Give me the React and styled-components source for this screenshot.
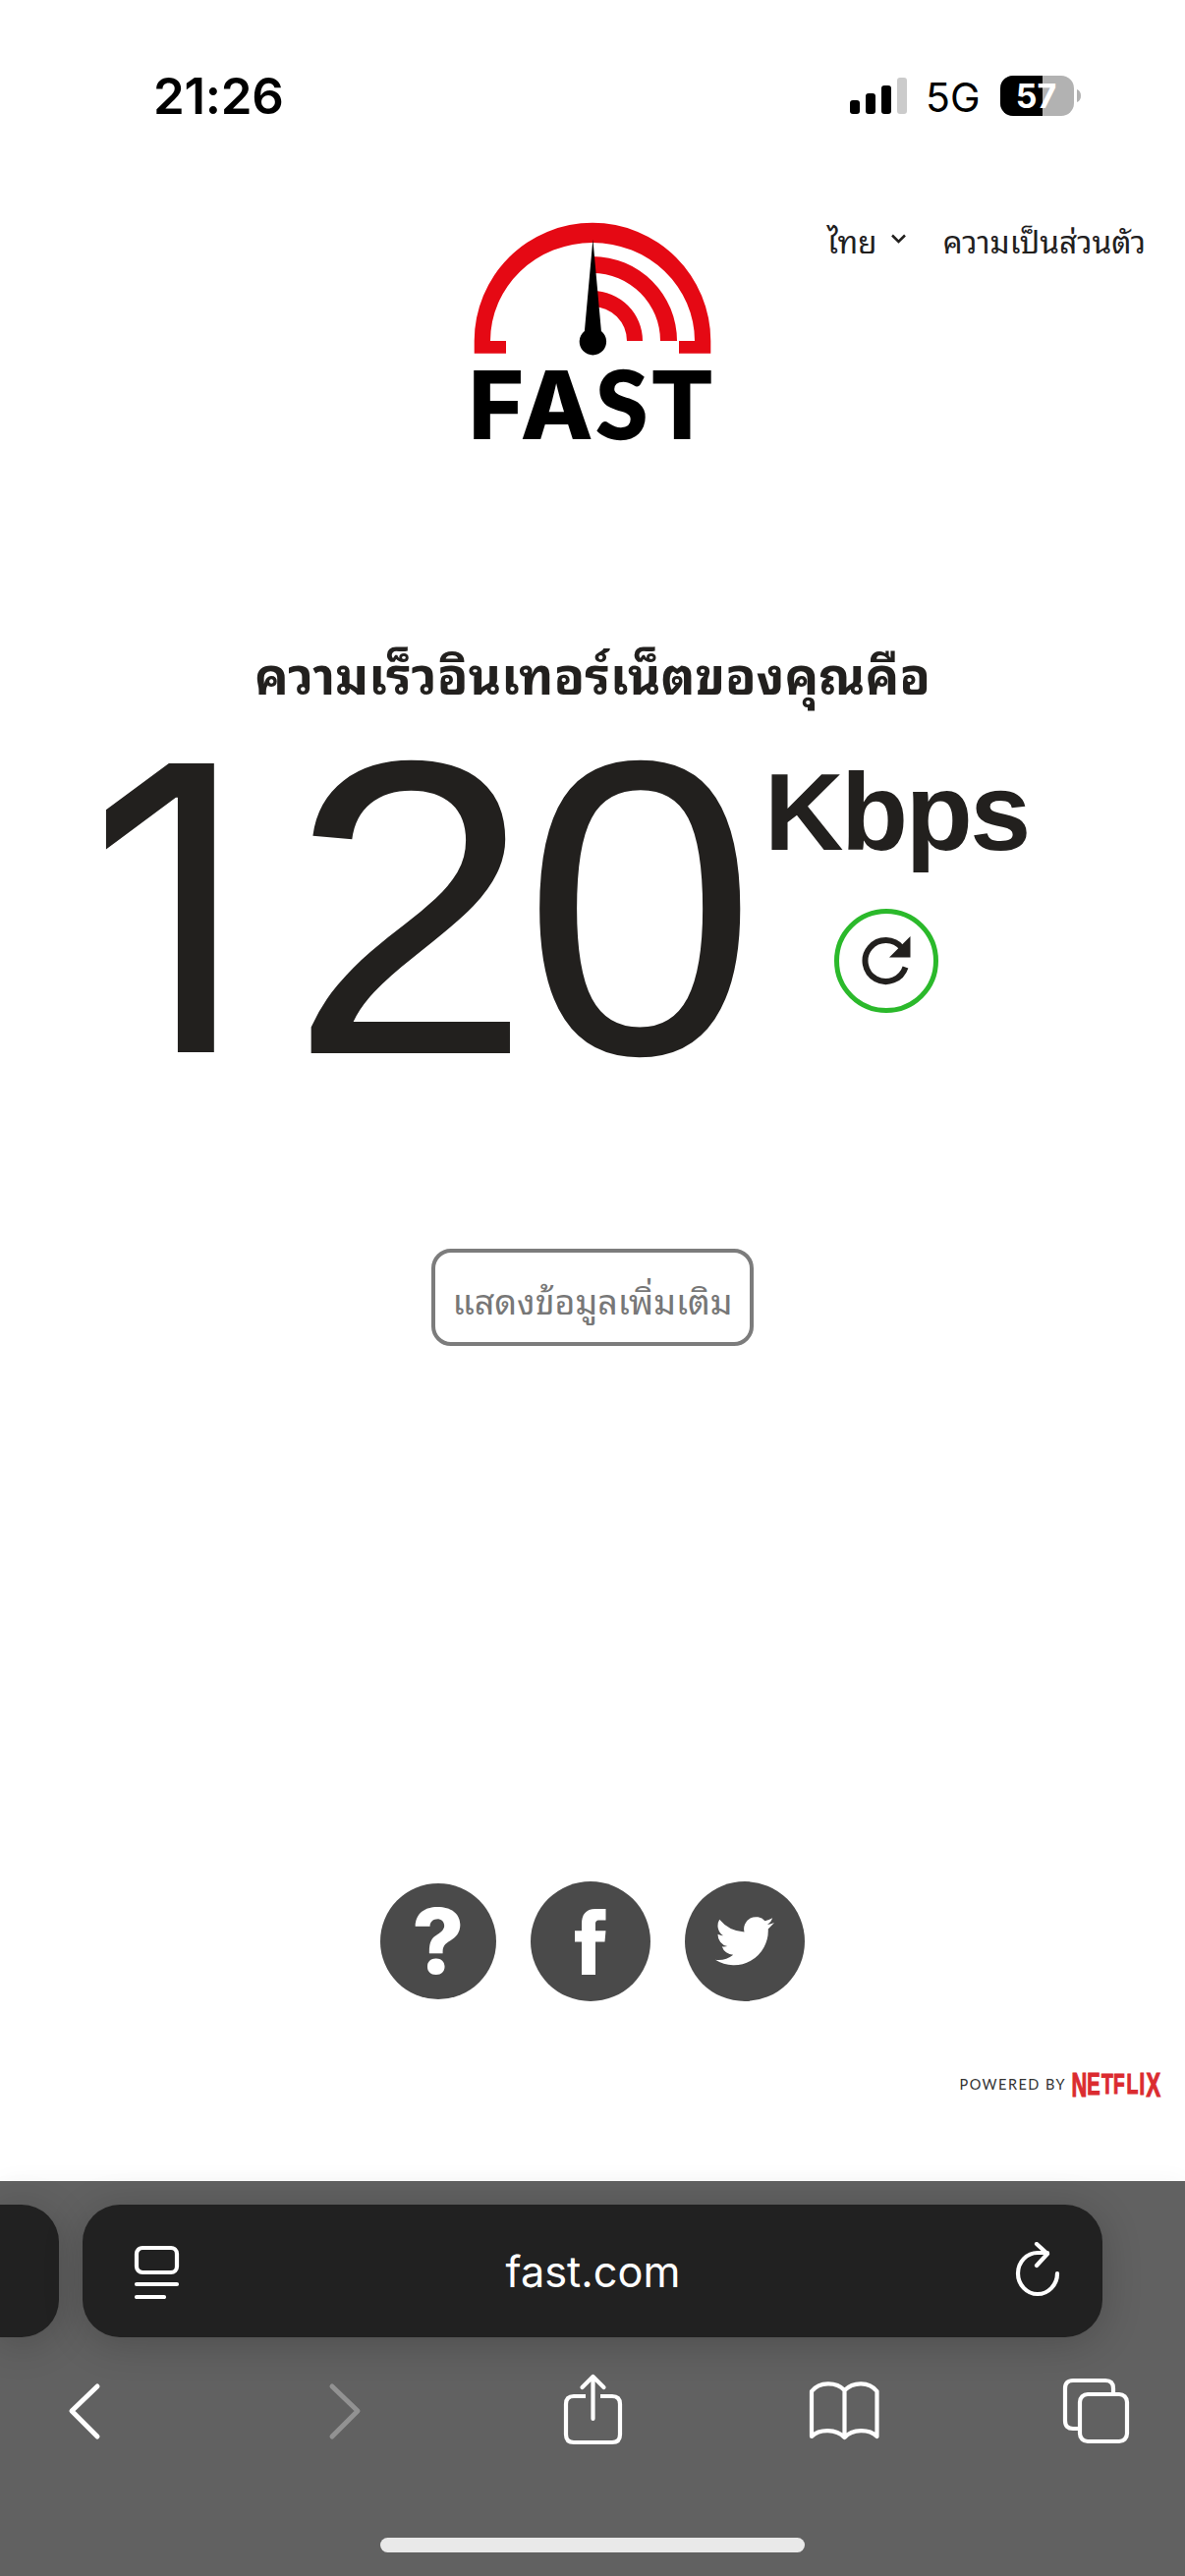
import styled, { createGlobalStyle } from 'styled-components'

const GlobalStyle = createGlobalStyle`
    * { box-sizing: border-box; }
    body { margin: 0; background: #fff; }
    button { font: inherit; cursor: pointer; }
`

const Screen = styled.div`
    width: 1206px;
    height: 2622px;
    display: flex;
    flex-direction: column;
    overflow: hidden;
    background: #fff;
    color: #22201e;
    font-family: 'Liberation Sans', 'Noto Sans Thai Looped', Loma, Garuda, 'Noto Sans Thai', 'Noto Sans', sans-serif;
`

const StatusBar = styled.header`
    height: 200px;
    flex: none;
    display: flex;
    align-items: flex-start;
    justify-content: space-between;
    padding: 77px 105px 0 156px;
    color: #000;
    font-family: Inter, sans-serif;
`

const Clock = styled.span`
    font-size: 51px;
    font-weight: 600;
    line-height: 42px;
    letter-spacing: -0.3px;
`

const StatusIcons = styled.div`
    display: flex;
    align-items: flex-start;
    gap: 18px;
`

const Network = styled.span`
    width: 58px;
    font-size: 41px;
    line-height: 44px;
`

const Top = styled.div`
    height: 444px;
    flex: none;
    display: grid;
    grid-template-columns: 1fr 246px 1fr;
    padding: 24px 40px 0;
`

const Logo = styled.svg`
    grid-column: 2;
    width: 246px;
    height: 230px;
`

const Menu = styled.nav`
    grid-column: 3;
    display: flex;
    justify-content: flex-end;
    align-items: center;
    height: 38px;
    font-size: 31.7px;
    white-space: nowrap;
`

const Language = styled.span`
    display: flex;
    align-items: center;
    gap: 13px;
    margin-right: 37px;
`

const Title = styled.h1`
    margin: 0;
    height: 90px;
    flex: none;
    line-height: 90px;
    font-size: 51.6px;
    font-weight: 700;
    text-align: center;
    white-space: nowrap;
`

const Speed = styled.section`
    height: 537px;
    flex: none;
    display: flex;
    padding: 40px 0 0 89px;
`

const Value = styled.div`
    width: 689px;
    display: flex;
    font-size: 427px;
    line-height: 300px;
    letter-spacing: -4px;
`

const One = styled.span`
    width: 210px;
    font-family: Inter, sans-serif;
    font-size: 404px;
`

const Two = styled.span`
    transform: scaleX(1.04);
`

const UnitColumn = styled.div`
    display: flex;
    flex-direction: column;
    width: 270px;
`

const Unit = styled.span`
    margin-top: -4px;
    font-size: 111.5px;
    font-weight: 700;
    line-height: 114px;
    letter-spacing: -2.5px;
`

const Reload = styled.button`
    display: flex;
    align-items: center;
    justify-content: center;
    width: 106px;
    height: 106px;
    margin: 41px 0 0 71px;
    padding: 0;
    border: 5px solid #2bb92b;
    border-radius: 50%;
    background: none;
`

const MoreButton = styled.button`
    align-self: center;
    flex: none;
    width: 328px;
    height: 99px;
    padding: 2px 0 0;
    border: 4px solid #7c7c7c;
    border-radius: 20px;
    background: none;
    color: #777;
    font-size: 35.8px;
    white-space: nowrap;
`

const Social = styled.div`
    display: flex;
    align-items: center;
    justify-content: center;
    gap: 35px;
    height: 124px;
    flex: none;
    margin-top: 544px;
`

const Round = styled.a`
    display: flex;
    align-items: center;
    justify-content: center;
    width: ${props => props.$size}px;
    height: ${props => props.$size}px;
    border-radius: 50%;
    background: #4a4a4a;
    color: #fff;
    font-family: Inter, sans-serif;
    font-size: 92px;
    font-weight: 800;
    line-height: 1;
`

const Powered = styled.footer`
    display: flex;
    justify-content: flex-end;
    height: 30px;
    flex: none;
    margin-top: 68px;
    padding-right: 20px;
`

const Browser = styled.div`
    margin-top: auto;
    height: 402px;
    flex: none;
    display: flex;
    flex-direction: column;
    background: #616161;
    box-shadow: 0 0 24px rgba(0, 0, 0, 0.04);
`

const Tabs = styled.div`
    display: flex;
    gap: 24px;
    padding-top: 24px;
`

const Tab = styled.div`
    display: flex;
    flex: none;
    align-items: center;
    justify-content: space-between;
    width: ${props => props.$width}px;
    height: 135px;
    padding: ${props => (props.$cut ? '0' : '0 42px 0 52px')};
    border-radius: ${props => (props.$cut ? '0 38px 38px 0' : '38px')};
    background: #212121;
    color: #fff;
    box-shadow: 0 6px 40px rgba(0, 0, 0, 0.2);
    font-family: Inter, sans-serif;
    font-size: 43.3px;
`

const Address = styled.span`
    margin-right: 9px;
`

const Toolbar = styled.div`
    display: flex;
    justify-content: space-between;
    padding: 35px 53px 0 50px;
`

const HomeBar = styled.div`
    align-self: center;
    width: 432px;
    height: 15px;
    margin: auto 0 24px;
    border-radius: 8px;
    background: #e9e9e9;
`

const line = {
    fill: 'none',
    stroke: '#fff',
    strokeWidth: 4.2,
    strokeLinecap: 'round',
    strokeLinejoin: 'round',
}

// the wordmark is taller at both ends, so every letter has its own size
const netflix = [
    { letter: 'N', x: 114.5, height: 23.5 },
    { letter: 'E', x: 130.2, height: 21.6 },
    { letter: 'T', x: 145, height: 20.8 },
    { letter: 'F', x: 157, height: 20.5 },
    { letter: 'L', x: 170.4, height: 20.9 },
    { letter: 'I', x: 183.5, height: 21.7 },
    { letter: 'X', x: 190.6, height: 23.5 },
]

function Signal() {
    return (
        <svg width="59" height="42" viewBox="0 0 59 42">
            <rect x="0" y="25" width="10" height="14" rx="3" />
            <rect x="16" y="18" width="10" height="21" rx="3" />
            <rect x="32" y="10" width="10" height="29" rx="3" />
            <rect x="48" y="2" width="10" height="37" rx="3" fill="#cbcbcb" />
        </svg>
    )
}

function Battery() {
    return (
        <svg width="83" height="42" viewBox="0 0 83 42">
            <defs>
                <clipPath id="cell"><rect width="75" height="41" rx="13" /></clipPath>
            </defs>
            <g clipPath="url(#cell)">
                <rect width="75" height="41" fill="#b2b2b2" />
                <rect width="43" height="41" />
            </g>
            <path d="M78 14c3 1 4 4 4 6.500s-1 5.500-4 6.500z" fill="#b2b2b2" />
            <text x="36.500" y="33" textAnchor="middle" fontSize="34" fontWeight="700" fill="#fff">57</text>
        </svg>
    )
}

function FastLogo() {
    return (
        <Logo viewBox="480 224 246 230">
            <path
                fill="#e50914"
                d="M482.7 359.7V347a120.3 120.3 0 0 1 240.6 0v12.7H691V347h16a104 100 0 0 0-208 0h16v12.7z"
            />
            <path fill="#e50914" d="M603 261a86 86 0 0 1 86 86h-17a69 69 0 0 0-69-69zM603 296a51 51 0 0 1 51 51h-16a35 35 0 0 0-35-35z" />
            <path d="M603.4 243.500l8.500 93.500a13.700 13.700 0 1 1-17 0z" />
            <text y="447" fontFamily="Inter, sans-serif" fontWeight="800" fontSize="96.500">
                <tspan x="476.800">F</tspan>
                <tspan x="529.500">A</tspan>
                <tspan x="606.500" fontFamily="Lato, sans-serif" fontWeight="900" fontSize="95.500" stroke="#000" strokeWidth="1.500">S</tspan>
                <tspan x="661.500">T</tspan>
            </text>
        </Logo>
    )
}

function PoweredBy() {
    return (
        <svg width="210" height="30" viewBox="0 0 210 30">
            <text x="0.500" y="20.500" fontFamily="Lato, sans-serif" fontSize="14.500" textLength="107" fill="#333">POWERED BY</text>
            <text transform="scale(0.64 1)" fontWeight="700" fill="#db2b30" stroke="#db2b30" strokeWidth="1.200">
                {netflix.map(({ letter, x, height }) => (
                    <tspan key={letter} x={x / 0.64} y={4 + height} fontSize={height / 0.688}>{letter}</tspan>
                ))}
            </text>
        </svg>
    )
}

export default function App() {
    return (
        <>
            <GlobalStyle />
            <Screen>
                <StatusBar>
                    <Clock>21:26</Clock>
                    <StatusIcons>
                        <Signal />
                        <Network>5G</Network>
                        <Battery />
                    </StatusIcons>
                </StatusBar>

                <Top>
                    <FastLogo />
                    <Menu>
                        <Language>
                            ไทย
                            <svg width="17" height="10" viewBox="0 0 17 10">
                                <path d="M2 1.500l6.500 6.500L15 1.500" fill="none" stroke="#22201e" strokeWidth="2.500" />
                            </svg>
                        </Language>
                        <span>ความเป็นส่วนตัว</span>
                    </Menu>
                </Top>

                <Title>ความเร็วอินเทอร์เน็ตของคุณคือ</Title>

                <Speed>
                    <Value>
                        <One>1</One>
                        <Two>2</Two>
                        <span>0</span>
                    </Value>
                    <UnitColumn>
                        <Unit>Kbps</Unit>
                        <Reload>
                            <svg width="50" height="50" viewBox="0 0 50 50">
                                <path d="M44.500 31.500A21 21 0 1 1 41 12" fill="none" stroke="#22201e" strokeWidth="6" />
                                <path d="M49.500 0v21.500H28z" fill="#22201e" />
                            </svg>
                        </Reload>
                    </UnitColumn>
                </Speed>

                <MoreButton>แสดงข้อมูลเพิ่มเติม</MoreButton>

                <Social>
                    <Round $size={118}>?</Round>
                    <Round $size={122}>
                        <svg width="32" height="67" viewBox="0 0 32 67">
                            <path d="M7 67V33.500H0V22.200h7v-7C7 6 11 0 21 0h10.500v11.500H25c-3.500 0-4 1.500-4 4.500v6.200h10.500l-1 11.300H21V67z" fill="#fff" />
                        </svg>
                    </Round>
                    <Round $size={122}>
                        <svg width="60" height="50" viewBox="0 0 24 20">
                            <path
                                d="M24 2.400a9.800 9.800 0 0 1-2.800.8A4.900 4.900 0 0 0 23.300.5a9.900 9.900 0 0 1-3.100 1.200 4.900 4.900 0 0 0-8.400 4.500A14 14 0 0 1 1.700 1.100a4.900 4.900 0 0 0 1.500 6.600A4.900 4.900 0 0 1 1 7.100a4.900 4.900 0 0 0 3.900 4.900 4.900 4.900 0 0 1-2.200.1 4.900 4.900 0 0 0 4.600 3.400A9.900 9.900 0 0 1 0 17.500 14 14 0 0 0 21.500 5z"
                                fill="#fff"
                            />
                        </svg>
                    </Round>
                </Social>

                <Powered>
                    <PoweredBy />
                </Powered>

                <Browser>
                    <Tabs>
                        <Tab $width={60} $cut />
                        <Tab $width={1038}>
                            <svg width="48" height="56" viewBox="0 0 48 56" {...line}>
                                <rect x="3" y="4" width="41" height="25" rx="6" />
                                <path d="M3 41h41M3 54h28" />
                            </svg>
                            <Address>fast.com</Address>
                            <svg width="48" height="60" viewBox="0 0 48 60" {...line}>
                                <path d="M44 32A20 21 0 1 1 24 11h10M23 2l11 10-11 12" />
                            </svg>
                        </Tab>
                    </Tabs>
                    <Toolbar>
                        <svg width="74" height="80" viewBox="0 0 74 80" {...line} strokeWidth={5}>
                            <path d="M49 15L23 40l26 26" />
                        </svg>
                        <svg width="74" height="80" viewBox="0 0 74 80" {...line} strokeWidth={5} stroke="#929292">
                            <path d="M31 15l26 25-26 26" />
                        </svg>
                        <svg width="74" height="80" viewBox="0 0 74 80" {...line}>
                            <path strokeLinecap="butt" d="M31 25H19q-8 0-8 8v31q0 8 8 8h39q8 0 8-8V33q0-8-8-8H46" />
                            <path d="M38.500 48V5M27.500 16l11-11 11 11" />
                        </svg>
                        <svg width="74" height="80" viewBox="0 0 74 80" {...line}>
                            <path d="M37.500 67V19C29 10 12 10 4 20v46c8-8 25-8 33.500 1 8-9 25-9 33-1V20c-8-10-24-10-33-1" />
                        </svg>
                        <svg width="74" height="80" viewBox="0 0 74 80" {...line}>
                            <path d="M20 58H13q-8 0-8-8V17q0-8 8-8H46q8 0 8 8v6" />
                            <rect x="20" y="23" width="48" height="48" rx="8" />
                        </svg>
                    </Toolbar>
                    <HomeBar />
                </Browser>
            </Screen>
        </>
    )
}
